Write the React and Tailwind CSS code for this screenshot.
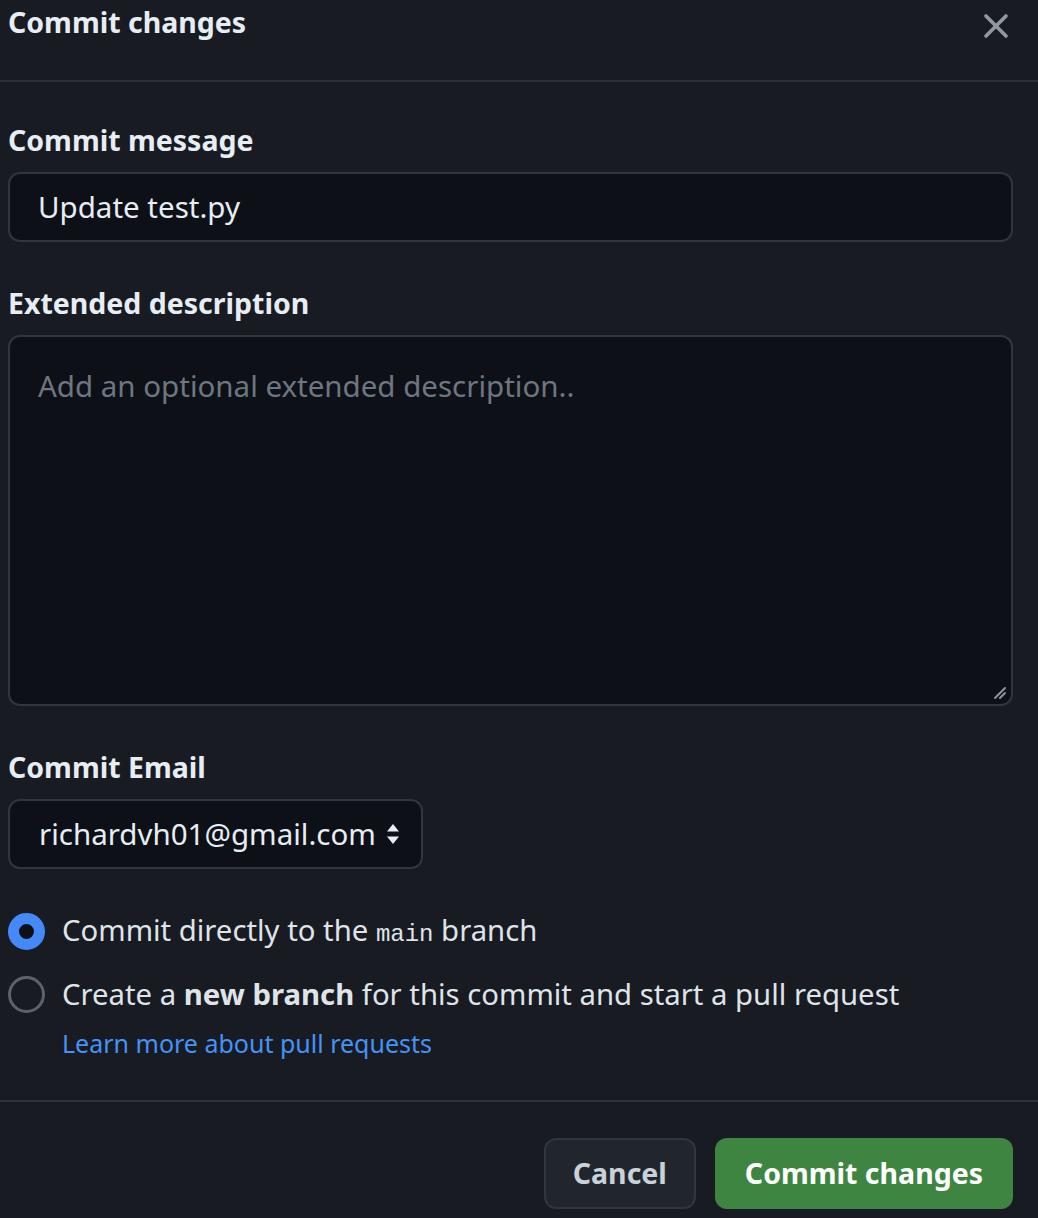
import { X } from 'lucide-react';

const font = "font-['Noto_Sans',sans-serif]";

function Label({ children }) {
  return <div className="text-[28.5px] leading-[40px] font-bold text-[#e6edf3]">{children}</div>;
}

function Radio({ checked }) {
  if (checked) {
    return <span className="shrink-0 size-[37px] rounded-full border-[11px] border-[#4489f7] bg-[#0d1117]" />;
  }
  return <span className="shrink-0 size-[37px] rounded-full border-[3px] border-[#5b626b]" />;
}

export default function App() {
  return (
    <div className={`w-[1038px] h-[1218px] overflow-hidden bg-[#181b22] ${font}`}>
      <div className="h-[82px] flex items-start justify-between pl-2 pr-[22px] border-b-2 border-[#2c3139]">
        <h1 className="text-[28.5px] leading-[40px] font-bold text-[#e6edf3] mt-[2px]">Commit changes</h1>
        <button className="mt-[6px] text-[#9198a1]">
          <X size={40} strokeWidth={2.2} />
        </button>
      </div>

      <div className="pl-2 pr-[25px] pt-[38px]">
        <Label>Commit message</Label>
        <div className="mt-3 h-[70px] flex items-center px-7 rounded-xl border-2 border-[#30363d] bg-[#0d1117] text-[29.5px] text-[#e6edf3]">
          Update test.py
        </div>

        <div className="mt-[41px]">
          <Label>Extended description</Label>
        </div>
        <div className="relative mt-3 h-[371px] rounded-xl border-2 border-[#30363d] bg-[#0d1117] px-7 pt-[29px]">
          <span className="text-[29.5px] leading-[40px] text-[#6e7681]">Add an optional extended description..</span>
          <svg className="absolute right-[4px] bottom-[4px]" width="16" height="16" viewBox="0 0 16 16">
            <path d="M14 4 4 14M14 9 9 14" stroke="#8b949e" strokeWidth="2" strokeLinecap="round" />
          </svg>
        </div>

        <div className="mt-[41px]">
          <Label>Commit Email</Label>
        </div>
        <div className="mt-3 w-[415px] h-[70px] flex items-center justify-between pl-[29px] pr-[20px] rounded-xl border-2 border-[#30363d] bg-[#0d1117] text-[29.5px] text-[#e6edf3]">
          <span>richardvh01@gmail.com</span>
          <svg width="16" height="24" viewBox="0 0 16 24">
            <path d="M8 2 14 9.5H2Z M8 22 14 14.5H2Z" fill="#e6edf3" />
          </svg>
        </div>

        <div className="mt-[40px] flex items-center gap-[17px] text-[29.3px] text-[#dfe4e9]">
          <Radio checked />
          <span>
            Commit directly to the <code className="font-['Liberation_Mono',monospace] text-[24px]">main</code> branch
          </span>
        </div>
        <div className="mt-[20px] flex items-center gap-[17px] text-[29.3px] text-[#dfe4e9]">
          <Radio />
          <span>
            Create a <b className="font-bold">new branch</b> for this commit and start a pull request
          </span>
        </div>
        <a className="block ml-[54px] mt-[8px] text-[25px] leading-[36px] text-[#4493f8]">Learn more about pull requests</a>
      </div>

      <div className="mt-[39px] border-t-2 border-[#2c3139] flex justify-end gap-[19px] pr-[25px] pt-[36px]">
        <button className="h-[71px] px-[27px] rounded-xl border-2 border-[#30363d] bg-[#21262d] text-[28.5px] font-bold text-[#c9d1d9]">
          Cancel
        </button>
        <button className="h-[71px] px-[30px] rounded-xl bg-[#3f8542] text-[28.5px] font-bold text-white">
          Commit changes
        </button>
      </div>
    </div>
  );
}
